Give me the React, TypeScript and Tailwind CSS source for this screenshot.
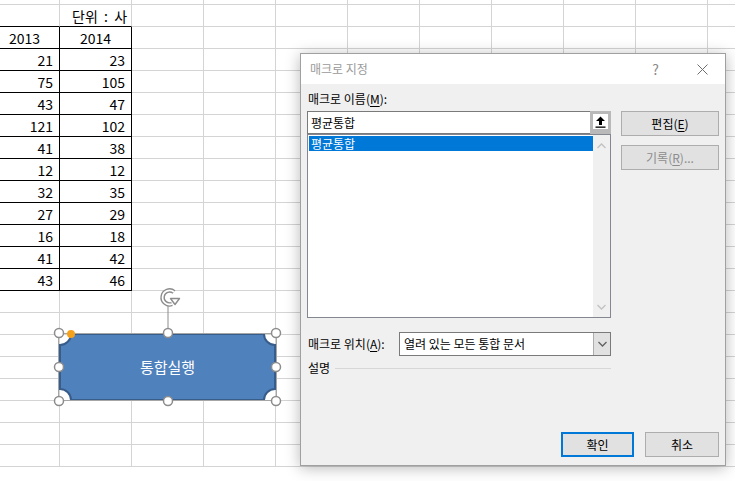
import React from "react";

const colWidths = [60, 72, 72, 72, 72, 72, 72, 72, 72, 72, 72];
const rowCount = 22;

const data2013 = [21, 75, 43, 121, 41, 12, 32, 27, 16, 41, 43];
const data2014 = [23, 105, 47, 102, 38, 12, 35, 29, 18, 42, 46];

// sheet row index: 0 = partial top row, 1 = 단위 row, 2 = header, 3..13 = data
const cellText = (r: number, c: number): string => {
  if (r === 1 && c === 1) return "단위  :  사";
  if (r === 2 && c === 0) return "2013";
  if (r === 2 && c === 1) return "2014";
  if (r >= 3 && r <= 13) {
    if (c === 0) return String(data2013[r - 3]);
    if (c === 1) return String(data2014[r - 3]);
  }
  return "";
};

const Sheet = () => {
  return (
    <div className="flex flex-col">
      {Array.from({ length: rowCount }).map((_, r) => (
        <div key={r} className={`flex ${r === 0 ? "h-[5px]" : "h-[22px]"}`}>
          {colWidths.map((w, c) => {
            const inTable = c <= 1;
            const blackBottom = inTable && r >= 1 && r <= 13;
            const blackRight = inTable && r >= 2 && r <= 13;
            const text = cellText(r, c);
            let align = "justify-end pr-[6px]";
            if (r === 1) align = "justify-start pl-[12px]";
            if (r === 2 && c === 0) align = "justify-end pr-[19px]";
            if (r === 2 && c === 1) align = "justify-center";
            return (
              <div
                key={c}
                style={{ width: w }}
                className={`shrink-0 h-full flex items-center overflow-hidden whitespace-pre border-r border-b ${align} ${
                  blackBottom ? "border-b-black" : "border-b-[#d4d4d4]"
                } ${blackRight ? "border-r-black" : "border-r-[#d4d4d4]"}`}
              >
                {text}
              </div>
            );
          })}
        </div>
      ))}
    </div>
  );
};

const Handle = ({ x, y }: { x: number; y: number }) => (
  <circle cx={x} cy={y} r={4.5} fill="#ffffff" stroke="#8c8c8c" strokeWidth={1.5} />
);

const Shape = () => {
  const W = 217;
  const H = 68;
  const r = 12;
  const d = `M ${r} 1 H ${W - r} A ${r - 1} ${r - 1} 0 0 0 ${W - 1} ${r} V ${H - r} A ${r - 1} ${r - 1} 0 0 0 ${W - r} ${H - 1} H ${r} A ${r - 1} ${r - 1} 0 0 0 1 ${H - r} V ${r} A ${r - 1} ${r - 1} 0 0 0 ${r} 1 Z`;
  return (
    <>
      <div className="absolute left-[59px] top-[333px] w-[217px] h-[68px] flex items-center justify-center">
        <svg className="absolute inset-0" width={W} height={H} viewBox={`0 0 ${W} ${H}`}>
          <path d={d} fill="#4f81bd" stroke="#385d8a" strokeWidth={2} />
        </svg>
        <span className="relative text-white text-[15px] leading-[18px]">통합실행</span>
      </div>
      <svg className="absolute left-0 top-0 pointer-events-none" width={735} height={481}>
        <rect x={58.5} y={333.5} width={218} height={67} fill="none" stroke="#a6a6a6" strokeWidth={1} />
        <line x1={168} y1={306} x2={168} y2={329} stroke="#8c8c8c" strokeWidth={1} />
        {/* rotation handle */}
        <path d="M 174 292 A 7 7 0 1 0 172 304" fill="none" stroke="#8c8c8c" strokeWidth={4.5} />
        <path d="M 174 292 A 7 7 0 1 0 172 304" fill="none" stroke="#ffffff" strokeWidth={1.8} />
        <path
          d="M 170.5 298.5 L 179.5 298.5 L 175 304.5 Z"
          fill="#ffffff"
          stroke="#8c8c8c"
          strokeWidth={1.4}
          strokeLinejoin="round"
        />
        <Handle x={59} y={333} />
        <Handle x={168} y={333} />
        <Handle x={276} y={333} />
        <Handle x={59} y={367} />
        <Handle x={276} y={367} />
        <Handle x={59} y={401} />
        <Handle x={168} y={401} />
        <Handle x={276} y={401} />
        <circle cx={71} cy={334} r={4} fill="#f4a21c" />
      </svg>
    </>
  );
};

const Mnemonic = ({ children }: { children: React.ReactNode }) => (
  <span className="underline underline-offset-2">{children}</span>
);

const Chevron = ({ up, color }: { up?: boolean; color: string }) => (
  <svg width="9" height="6" viewBox="0 0 9 6">
    <path
      d={up ? "M 0.5 5 L 4.5 1 L 8.5 5" : "M 0.5 1 L 4.5 5 L 8.5 1"}
      fill="none"
      stroke={color}
      strokeWidth={1.3}
    />
  </svg>
);

const DialogButton = ({
  children,
  primary,
  disabled,
  className = "",
}: {
  children: React.ReactNode;
  primary?: boolean;
  disabled?: boolean;
  className?: string;
}) => (
  <div
    className={`h-[25px] flex items-center justify-center bg-[#e1e1e1] text-[12px] leading-[16px] ${
      primary ? "border-2 border-[#0078d7]" : "border border-[#adadad]"
    } ${disabled ? "text-[#8c8c8c]" : "text-black"} ${className}`}
  >
    {children}
  </div>
);

const MacroDialog = () => {
  return (
    <div className="absolute left-[300px] top-[53px] w-[426px] h-[413px] border border-[#a0a0a0] bg-[#f0f0f0] shadow-[0_2px_14px_rgba(0,0,0,0.28)] flex flex-col text-[12px] leading-[16px]">
      <div className="h-[30px] bg-white flex items-center pl-[9px] pr-[17px] shrink-0">
        <span className="text-[#9a9a9a]">매크로 지정</span>
        <span className="ml-auto text-[#8a8a8a] text-[14px] mr-[38px]">?</span>
        <svg width="11" height="11" viewBox="0 0 11 11">
          <path d="M 0.5 0.5 L 10.5 10.5 M 10.5 0.5 L 0.5 10.5" stroke="#6e6e6e" strokeWidth={1} />
        </svg>
      </div>
      <div className="flex-1 flex flex-col px-[6px] pt-[7px] pb-[8px]">
        <div className="flex justify-between">
          <div className="w-[304px] flex flex-col">
            <div className="pl-[1px] h-[16px] mb-[4px] text-black">
              매크로 이름(<Mnemonic>M</Mnemonic>):
            </div>
            <div className="h-[23px] flex border border-[#7a7a7a] bg-white">
              <div className="flex-1 flex items-center pl-[3px] text-black">평균통합</div>
              <div className="w-[21px] bg-[#b9b9b9] p-[3px] pb-[5px] -mt-[1px] -mr-[1px] h-[23px]">
                <div className="w-full h-full bg-white flex items-center justify-center">
                  <svg width="11" height="12" viewBox="0 0 11 12">
                    <path d="M 5.5 0.5 L 10 5 L 7 5 L 7 9 L 4 9 L 4 5 L 1 5 Z" fill="#000" />
                    <rect x="0.5" y="10.5" width="10" height="1.3" fill="#000" />
                  </svg>
                </div>
              </div>
            </div>
            <div className="h-[184px] border border-[#828790] bg-white flex">
              <div className="flex-1 pl-[1px] pt-[1px]">
                <div className="h-[15px] bg-[#0078d7] text-white flex items-center pl-[2px]">평균통합</div>
              </div>
              <div className="w-[17px] bg-[#f0f0f0] flex flex-col items-center justify-between pt-[8px] pb-[7px]">
                <Chevron up color="#c2c2c2" />
                <Chevron color="#c2c2c2" />
              </div>
            </div>
          </div>
          <div className="w-[98px] flex flex-col gap-[9px] pt-[20px]">
            <DialogButton>
              편집(<Mnemonic>E</Mnemonic>)
            </DialogButton>
            <DialogButton disabled>
              기록(<Mnemonic>R</Mnemonic>)...
            </DialogButton>
          </div>
        </div>
        <div className="mt-[14px] w-[304px] flex items-center">
          <div className="w-[92px] pl-[1px] text-black">
            매크로 위치(<Mnemonic>A</Mnemonic>):
          </div>
          <div className="flex-1 h-[24px] border border-[#7a7a7a] bg-white flex">
            <div className="flex-1 flex items-center pl-[4px] text-black">열려 있는 모든 통합 문서</div>
            <div className="w-[17px] bg-[#e1e1e1] border-l border-[#adadad] flex items-center justify-center">
              <Chevron color="#606060" />
            </div>
          </div>
        </div>
        <div className="mt-[4px] w-[304px] flex items-center">
          <span className="pl-[1px] text-black">설명</span>
          <div className="flex-1 ml-[5px] h-px bg-[#d7d7d7]" />
        </div>
        <div className="mt-auto flex justify-end gap-[11px]">
          <DialogButton primary className="w-[73px]">
            확인
          </DialogButton>
          <DialogButton className="w-[74px]">취소</DialogButton>
        </div>
      </div>
    </div>
  );
};

const App = () => {
  return (
    <div className="relative w-[735px] h-[481px] overflow-hidden bg-white text-[14px] leading-[18px] text-black font-['Noto_Sans_CJK_KR','Noto_Sans',sans-serif]">
      <Sheet />
      <Shape />
      <MacroDialog />
    </div>
  );
};

export default App;
